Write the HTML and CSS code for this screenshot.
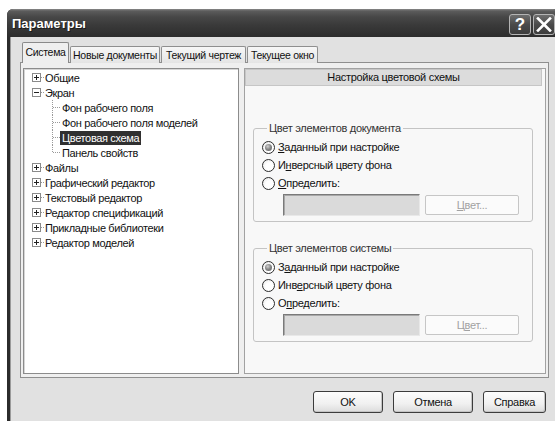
FILE: index.html
```html
<!DOCTYPE html>
<html lang="ru">
<head>
<meta charset="utf-8">
<title>Параметры</title>
<link rel="stylesheet" href="styles.css">
</head>
<body>
<div class="window">
  <div class="titlebar">
    <span class="title">Параметры</span>
    <div class="caption-buttons">
      <span class="cap-btn help">?</span>
      <span class="cap-btn close">
        <svg width="16" height="15" viewBox="0 0 16 15"><path d="M2 1.5 L14 13.5 M14 1.5 L2 13.5" stroke="#fff" stroke-width="2.6" stroke-linecap="square"/></svg>
      </span>
    </div>
  </div>

  <div class="client">
    <div class="tabs">
      <div class="tab active t-system">Система</div>
      <div class="tab t-new">Новые документы</div>
      <div class="tab t-drawing">Текущий чертеж</div>
      <div class="tab t-window">Текущее окно</div>
    </div>

    <div class="tab-page">
      <div class="tree">
        <div class="row root">
          <svg class="exp" width="13" height="9" viewBox="0 0 13 9"><rect x="0.5" y="0.5" width="8" height="8" fill="#fff" stroke="#8a8a8a"/><path d="M2 4.5h5M4.5 2v5" stroke="#222"/><path d="M9 4.5h4" stroke="#9a9a9a" stroke-dasharray="1 1"/></svg>
          <span class="label">Общие</span>
        </div>
        <div class="row root">
          <svg class="exp" width="13" height="9" viewBox="0 0 13 9"><rect x="0.5" y="0.5" width="8" height="8" fill="#fff" stroke="#8a8a8a"/><path d="M2 4.5h5" stroke="#222"/><path d="M9 4.5h4" stroke="#9a9a9a" stroke-dasharray="1 1"/></svg>
          <span class="label">Экран</span>
        </div>
        <div class="row child">
          <svg class="branch" width="8" height="15" viewBox="0 0 8 15"><path d="M0.5 0v15M1 7.5h7" stroke="#9a9a9a" stroke-dasharray="1 1"/></svg>
          <span class="label">Фон рабочего поля</span>
        </div>
        <div class="row child">
          <svg class="branch" width="8" height="15" viewBox="0 0 8 15"><path d="M0.5 0v15M1 7.5h7" stroke="#9a9a9a" stroke-dasharray="1 1"/></svg>
          <span class="label">Фон рабочего поля моделей</span>
        </div>
        <div class="row child">
          <svg class="branch" width="8" height="15" viewBox="0 0 8 15"><path d="M0.5 0v15M1 7.5h7" stroke="#9a9a9a" stroke-dasharray="1 1"/></svg>
          <span class="label selected">Цветовая схема</span>
        </div>
        <div class="row child">
          <svg class="branch" width="8" height="15" viewBox="0 0 8 15"><path d="M0.5 0v8M1 7.5h7" stroke="#9a9a9a" stroke-dasharray="1 1"/></svg>
          <span class="label">Панель свойств</span>
        </div>
        <div class="row root">
          <svg class="exp" width="13" height="9" viewBox="0 0 13 9"><rect x="0.5" y="0.5" width="8" height="8" fill="#fff" stroke="#8a8a8a"/><path d="M2 4.5h5M4.5 2v5" stroke="#222"/><path d="M9 4.5h4" stroke="#9a9a9a" stroke-dasharray="1 1"/></svg>
          <span class="label">Файлы</span>
        </div>
        <div class="row root">
          <svg class="exp" width="13" height="9" viewBox="0 0 13 9"><rect x="0.5" y="0.5" width="8" height="8" fill="#fff" stroke="#8a8a8a"/><path d="M2 4.5h5M4.5 2v5" stroke="#222"/><path d="M9 4.5h4" stroke="#9a9a9a" stroke-dasharray="1 1"/></svg>
          <span class="label">Графический редактор</span>
        </div>
        <div class="row root">
          <svg class="exp" width="13" height="9" viewBox="0 0 13 9"><rect x="0.5" y="0.5" width="8" height="8" fill="#fff" stroke="#8a8a8a"/><path d="M2 4.5h5M4.5 2v5" stroke="#222"/><path d="M9 4.5h4" stroke="#9a9a9a" stroke-dasharray="1 1"/></svg>
          <span class="label">Текстовый редактор</span>
        </div>
        <div class="row root">
          <svg class="exp" width="13" height="9" viewBox="0 0 13 9"><rect x="0.5" y="0.5" width="8" height="8" fill="#fff" stroke="#8a8a8a"/><path d="M2 4.5h5M4.5 2v5" stroke="#222"/><path d="M9 4.5h4" stroke="#9a9a9a" stroke-dasharray="1 1"/></svg>
          <span class="label">Редактор спецификаций</span>
        </div>
        <div class="row root">
          <svg class="exp" width="13" height="9" viewBox="0 0 13 9"><rect x="0.5" y="0.5" width="8" height="8" fill="#fff" stroke="#8a8a8a"/><path d="M2 4.5h5M4.5 2v5" stroke="#222"/><path d="M9 4.5h4" stroke="#9a9a9a" stroke-dasharray="1 1"/></svg>
          <span class="label">Прикладные библиотеки</span>
        </div>
        <div class="row root">
          <svg class="exp" width="13" height="9" viewBox="0 0 13 9"><rect x="0.5" y="0.5" width="8" height="8" fill="#fff" stroke="#8a8a8a"/><path d="M2 4.5h5M4.5 2v5" stroke="#222"/><path d="M9 4.5h4" stroke="#9a9a9a" stroke-dasharray="1 1"/></svg>
          <span class="label">Редактор моделей</span>
        </div>
      </div>

      <div class="pane">
        <div class="pane-header">Настройка цветовой схемы</div>

        <fieldset class="group first">
          <legend>Цвет элементов документа</legend>
          <div class="radio-row"><span class="radio checked"></span><span><u>З</u>аданный при настройке</span></div>
          <div class="radio-row"><span class="radio"></span><span>И<u>н</u>версный цвету фона</span></div>
          <div class="radio-row"><span class="radio"></span><span><u>О</u>пределить:</span></div>
          <div class="color-row">
            <span class="swatch"></span>
            <span class="btn-disabled"><u>Ц</u>вет...</span>
          </div>
        </fieldset>

        <fieldset class="group second">
          <legend>Цвет элементов системы</legend>
          <div class="radio-row"><span class="radio checked"></span><span>З<u>а</u>данный при настройке</span></div>
          <div class="radio-row"><span class="radio"></span><span>Инв<u>е</u>рсный цвету фона</span></div>
          <div class="radio-row"><span class="radio"></span><span>О<u>п</u>ределить:</span></div>
          <div class="color-row">
            <span class="swatch"></span>
            <span class="btn-disabled">Ц<u>в</u>ет...</span>
          </div>
        </fieldset>
      </div>
    </div>

    <div class="footer">
      <span class="btn ok">OK</span>
      <span class="btn cancel">Отмена</span>
      <span class="btn help-btn">Справка</span>
    </div>
  </div>
</div>
</body>
</html>
```

FILE: styles.css
```css
html, body {
  margin: 0;
  padding: 0;
  background: #fff;
  overflow: hidden;
}

body {
  font-family: "Liberation Sans", Arial, sans-serif;
  font-size: 11px;
  letter-spacing: -0.3px;
  color: #111;
}

u {
  text-decoration: underline;
  text-underline-offset: 1px;
}

/* window frame */
.window {
  margin: 9px 0 0 7px;
  width: 552px;
  height: 430px;
  display: flex;
  flex-direction: column;
  border-radius: 6px 6px 0 0;
  background: #2b2b2b;
}

.titlebar {
  height: 28px;
  flex: none;
  display: flex;
  align-items: flex-start;
  padding: 0 0 0 5px;
  border-radius: 6px 6px 0 0;
  background: linear-gradient(#8a8a8a 0, #5c5c5c 2px, #474747 8px, #3a3a3a 16px, #2c2c2c 28px);
  box-sizing: border-box;
}

.title {
  margin-top: 7px;
  font-weight: bold;
  font-size: 13px;
  letter-spacing: 0;
  color: #fff;
  text-shadow: 1px 1px 0 #1c1c1c;
}

.caption-buttons {
  margin: 5px 4px 0 auto;
  display: flex;
  gap: 2px;
}

.cap-btn {
  width: 22px;
  height: 21px;
  box-sizing: border-box;
  border: 1px solid #b4b4b4;
  border-radius: 3px;
  background: linear-gradient(#6e6e6e, #4a4a4a 50%, #3c3c3c);
  display: flex;
  align-items: center;
  justify-content: center;
  color: #fff;
}

.cap-btn.help {
  font-size: 17px;
  font-weight: bold;
  letter-spacing: 0;
  line-height: 19px;
}

/* dialog client area */
.client {
  flex: 1;
  background: #e1e1e1;
  border-left: 3px solid #2b2b2b;
  padding: 5px 10px 0 10px;
  box-shadow: inset 1px 0 0 #9a9a9a;
}

.tabs {
  display: flex;
  align-items: flex-end;
  gap: 1px;
  height: 21px;
  margin: 0 0 -1px 2px;
  position: relative;
}

.tab {
  height: 17px;
  box-sizing: border-box;
  border: 1px solid #8f8f8f;
  border-bottom: none;
  border-radius: 2px 2px 0 0;
  text-align: center;
  white-space: nowrap;
  overflow: hidden;
  font-size: 10.5px;
  line-height: 16px;
  letter-spacing: -0.3px;
  background: linear-gradient(#f7f7f7, #e4e4e4);
  color: #111;
}

.t-system { width: 47px; }
.t-new { width: 90px; }
.t-drawing { width: 85px; }
.t-window { width: 71px; }

.tab.active {
  height: 21px;
  line-height: 19px;
  background: #efefef;
  border-color: #8a8a8a;
  position: relative;
  z-index: 1;
}

.tab-page {
  height: 316px;
  box-sizing: border-box;
  border: 1px solid #8f8f8f;
  background: #efefef;
  display: flex;
  gap: 5px;
  padding: 5px 2px 3px 2px;
}

/* tree */
.tree {
  width: 216px;
  flex: none;
  box-sizing: border-box;
  background: #fff;
  border: 1px solid #8c8c8c;
  box-shadow: inset 1px 1px 0 #d6d6d6;
  padding-top: 1px;
  letter-spacing: -0.35px;
}

.row {
  height: 15px;
  display: flex;
  align-items: center;
  white-space: nowrap;
}

.row.root {
  padding-left: 8px;
}

.row.child {
  padding-left: 28px;
}

.exp, .branch {
  flex: none;
  display: block;
}

.label {
  padding: 0 2px 0 0;
  line-height: 14px;
}

.row.child .label {
  padding: 0 2px;
}

.label.selected {
  background: #303030;
  color: #fff;
}

/* right pane */
.pane {
  flex: 1;
  box-sizing: border-box;
  border: 1px solid #a2a2a2;
  background: #f8f8f8;
  display: flex;
  flex-direction: column;
}

.pane-header {
  height: 17px;
  box-sizing: border-box;
  margin-right: 3px;
  border: 1px solid #c6c6c6;
  background: #dcdcdc;
  text-align: center;
  line-height: 15px;
  color: #111;
}

.group {
  margin: 36px 12px 0 8px;
  padding: 3px 0 5px 8px;
  border: 1px solid #c4c4c4;
  border-radius: 3px;
  min-inline-size: 0;
}

.group.second {
  margin-top: 20px;
}

.group legend {
  padding: 0 2px;
  margin-left: 5px;
  line-height: 13px;
  color: #333;
}

.radio-row {
  height: 18px;
  display: flex;
  align-items: center;
  gap: 3px;
  color: #111;
}

.radio {
  width: 13px;
  height: 13px;
  box-sizing: border-box;
  border: 1px solid #2c2c2c;
  border-radius: 50%;
  background: radial-gradient(circle at 60% 60%, #fff 40%, #e2e2e2 100%);
  display: flex;
  align-items: center;
  justify-content: center;
  flex: none;
}

.radio.checked::after {
  content: "";
  width: 7px;
  height: 7px;
  border-radius: 50%;
  background: radial-gradient(circle at 40% 35%, #d0d0d0 0, #8a8a8a 45%, #5a5a5a 100%);
}

.color-row {
  display: flex;
  align-items: center;
  gap: 5px;
  margin: 2px 0 0 21px;
}

.swatch {
  width: 137px;
  height: 22px;
  box-sizing: border-box;
  background: #dadada;
  border: 1px solid;
  border-color: #7a7a7a #e8e8e8 #e8e8e8 #7a7a7a;
  box-shadow: inset 1px 1px 0 #a8a8a8;
}

.btn-disabled {
  width: 94px;
  height: 20px;
  box-sizing: border-box;
  border: 1px solid #c6c6c6;
  border-radius: 2px;
  background: #fbfbfb;
  color: #a2a2a2;
  text-align: center;
  line-height: 18px;
}

/* dialog buttons */
.footer {
  display: flex;
  justify-content: flex-end;
  gap: 10px;
  margin-top: 13px;
  padding-right: 3px;
}

.btn {
  height: 22px;
  box-sizing: border-box;
  border: 1px solid #3c3c3c;
  border-radius: 3px;
  background: linear-gradient(#fdfdfd, #f0f0f0 60%, #dcdcdc);
  box-shadow: inset -1px -1px 0 #c4c4c4;
  text-align: center;
  line-height: 20px;
  color: #111;
}

.btn.ok { width: 70px; }
.btn.cancel { width: 80px; }
.btn.help-btn { width: 63px; }
```
